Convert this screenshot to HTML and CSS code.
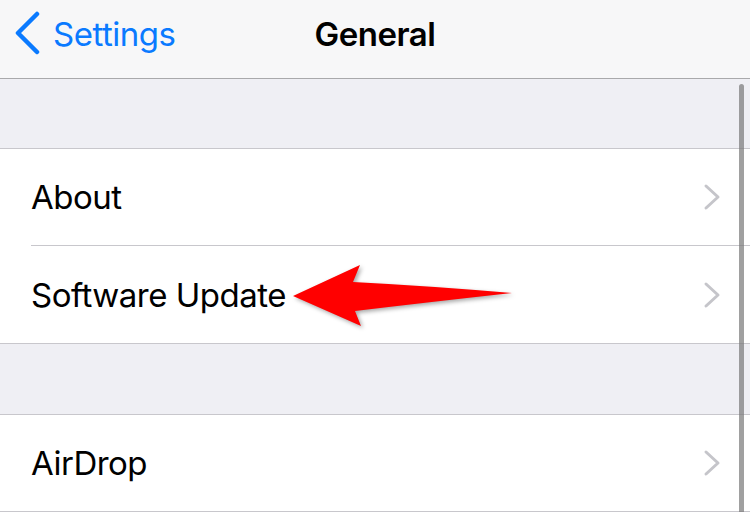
FILE: index.html
```html
<!DOCTYPE html>
<html lang="en">
<head>
  <meta charset="UTF-8">
  <title>General</title>
  <link rel="stylesheet" href="styles.css">
</head>
<body>

  <header class="nav-bar">
    <div class="back">
      <svg class="back-chevron" width="30" height="46" viewBox="0 0 30 46">
        <polyline points="23,3 4,22 23,41" />
      </svg>
      <span>Settings</span>
    </div>
    <h1>General</h1>
  </header>

  <div class="gap first"></div>
  <ul class="group">
    <li class="row">
      <span>About</span>
      <svg class="chevron" width="18" height="28" viewBox="0 0 18 28"><polyline points="3,3 15,14 3,25" /></svg>
    </li>
    <li class="row">
      <span>Software Update</span>
      <svg class="chevron" width="18" height="28" viewBox="0 0 18 28"><polyline points="3,3 15,14 3,25" /></svg>
    </li>
  </ul>

  <div class="gap second"></div>
  <ul class="group">
    <li class="row">
      <span>AirDrop</span>
      <svg class="chevron" width="18" height="28" viewBox="0 0 18 28"><polyline points="3,3 15,14 3,25" /></svg>
    </li>
  </ul>

  <div class="scrollbar"></div>

  <svg class="pointer" width="250" height="90" viewBox="0 0 250 90">
    <path d="M13,46 L80,15 L73,32 Q150,36 232,43 Q150,52 75,61 L81,76 Z" />
  </svg>

</body>
</html>
```

FILE: styles.css
```css
* { box-sizing: border-box; }
body {
  margin: 0;
  width: 750px;
  height: 512px;
  overflow: hidden;
  position: relative;
  font-family: Inter, 'Liberation Sans', sans-serif;
  background-color: #efeff4;
  color: #000;
}
.nav-bar {
  height: 79px;
  padding-bottom: 10px;
  background-color: #f7f7f8;
  border-bottom: 1px solid #a9a9ab;
  display: flex;
  align-items: center;
  justify-content: center;
  position: relative;
}
.nav-bar h1 {
  margin: 0;
  font-size: 33px;
  font-weight: 600;
  letter-spacing: -0.5px;
}
.back {
  position: absolute;
  left: 14px;
  top: 11px;
  display: flex;
  align-items: center;
  color: #0a7aff;
  font-size: 33px;
  letter-spacing: -0.5px;
}
.back-chevron {
  margin-right: 9px;
}
.back-chevron polyline {
  fill: none;
  stroke: #0a7aff;
  stroke-width: 4.5;
  stroke-linecap: round;
  stroke-linejoin: round;
}
.gap.first { height: 69px; }
.gap.second { height: 70px; }
.group {
  list-style: none;
  margin: 0;
  padding: 0;
  background: white;
  border-top: 1px solid #c8c7cc;
  border-bottom: 1px solid #c8c7cc;
}
.row {
  height: 96px;
  margin-left: 31px;
  padding-right: 29px;
  display: flex;
  align-items: center;
  justify-content: space-between;
  font-size: 33px;
  letter-spacing: -0.5px;
}
.row + .row {
  height: 98px;
  border-top: 1px solid #c8c7cc;
}
.chevron polyline {
  fill: none;
  stroke: #c5c5ca;
  stroke-width: 3;
  stroke-linecap: round;
  stroke-linejoin: round;
}
.scrollbar {
  position: absolute;
  left: 739px;
  top: 84px;
  width: 5px;
  height: 440px;
  border-radius: 3px;
  background: rgba(120, 120, 120, 0.7);
}
.pointer {
  position: absolute;
  left: 280px;
  top: 250px;
}
.pointer path {
  fill: #ff0000;
  filter: drop-shadow(2px 2px 2px rgba(0, 0, 0, 0.35));
}
```
